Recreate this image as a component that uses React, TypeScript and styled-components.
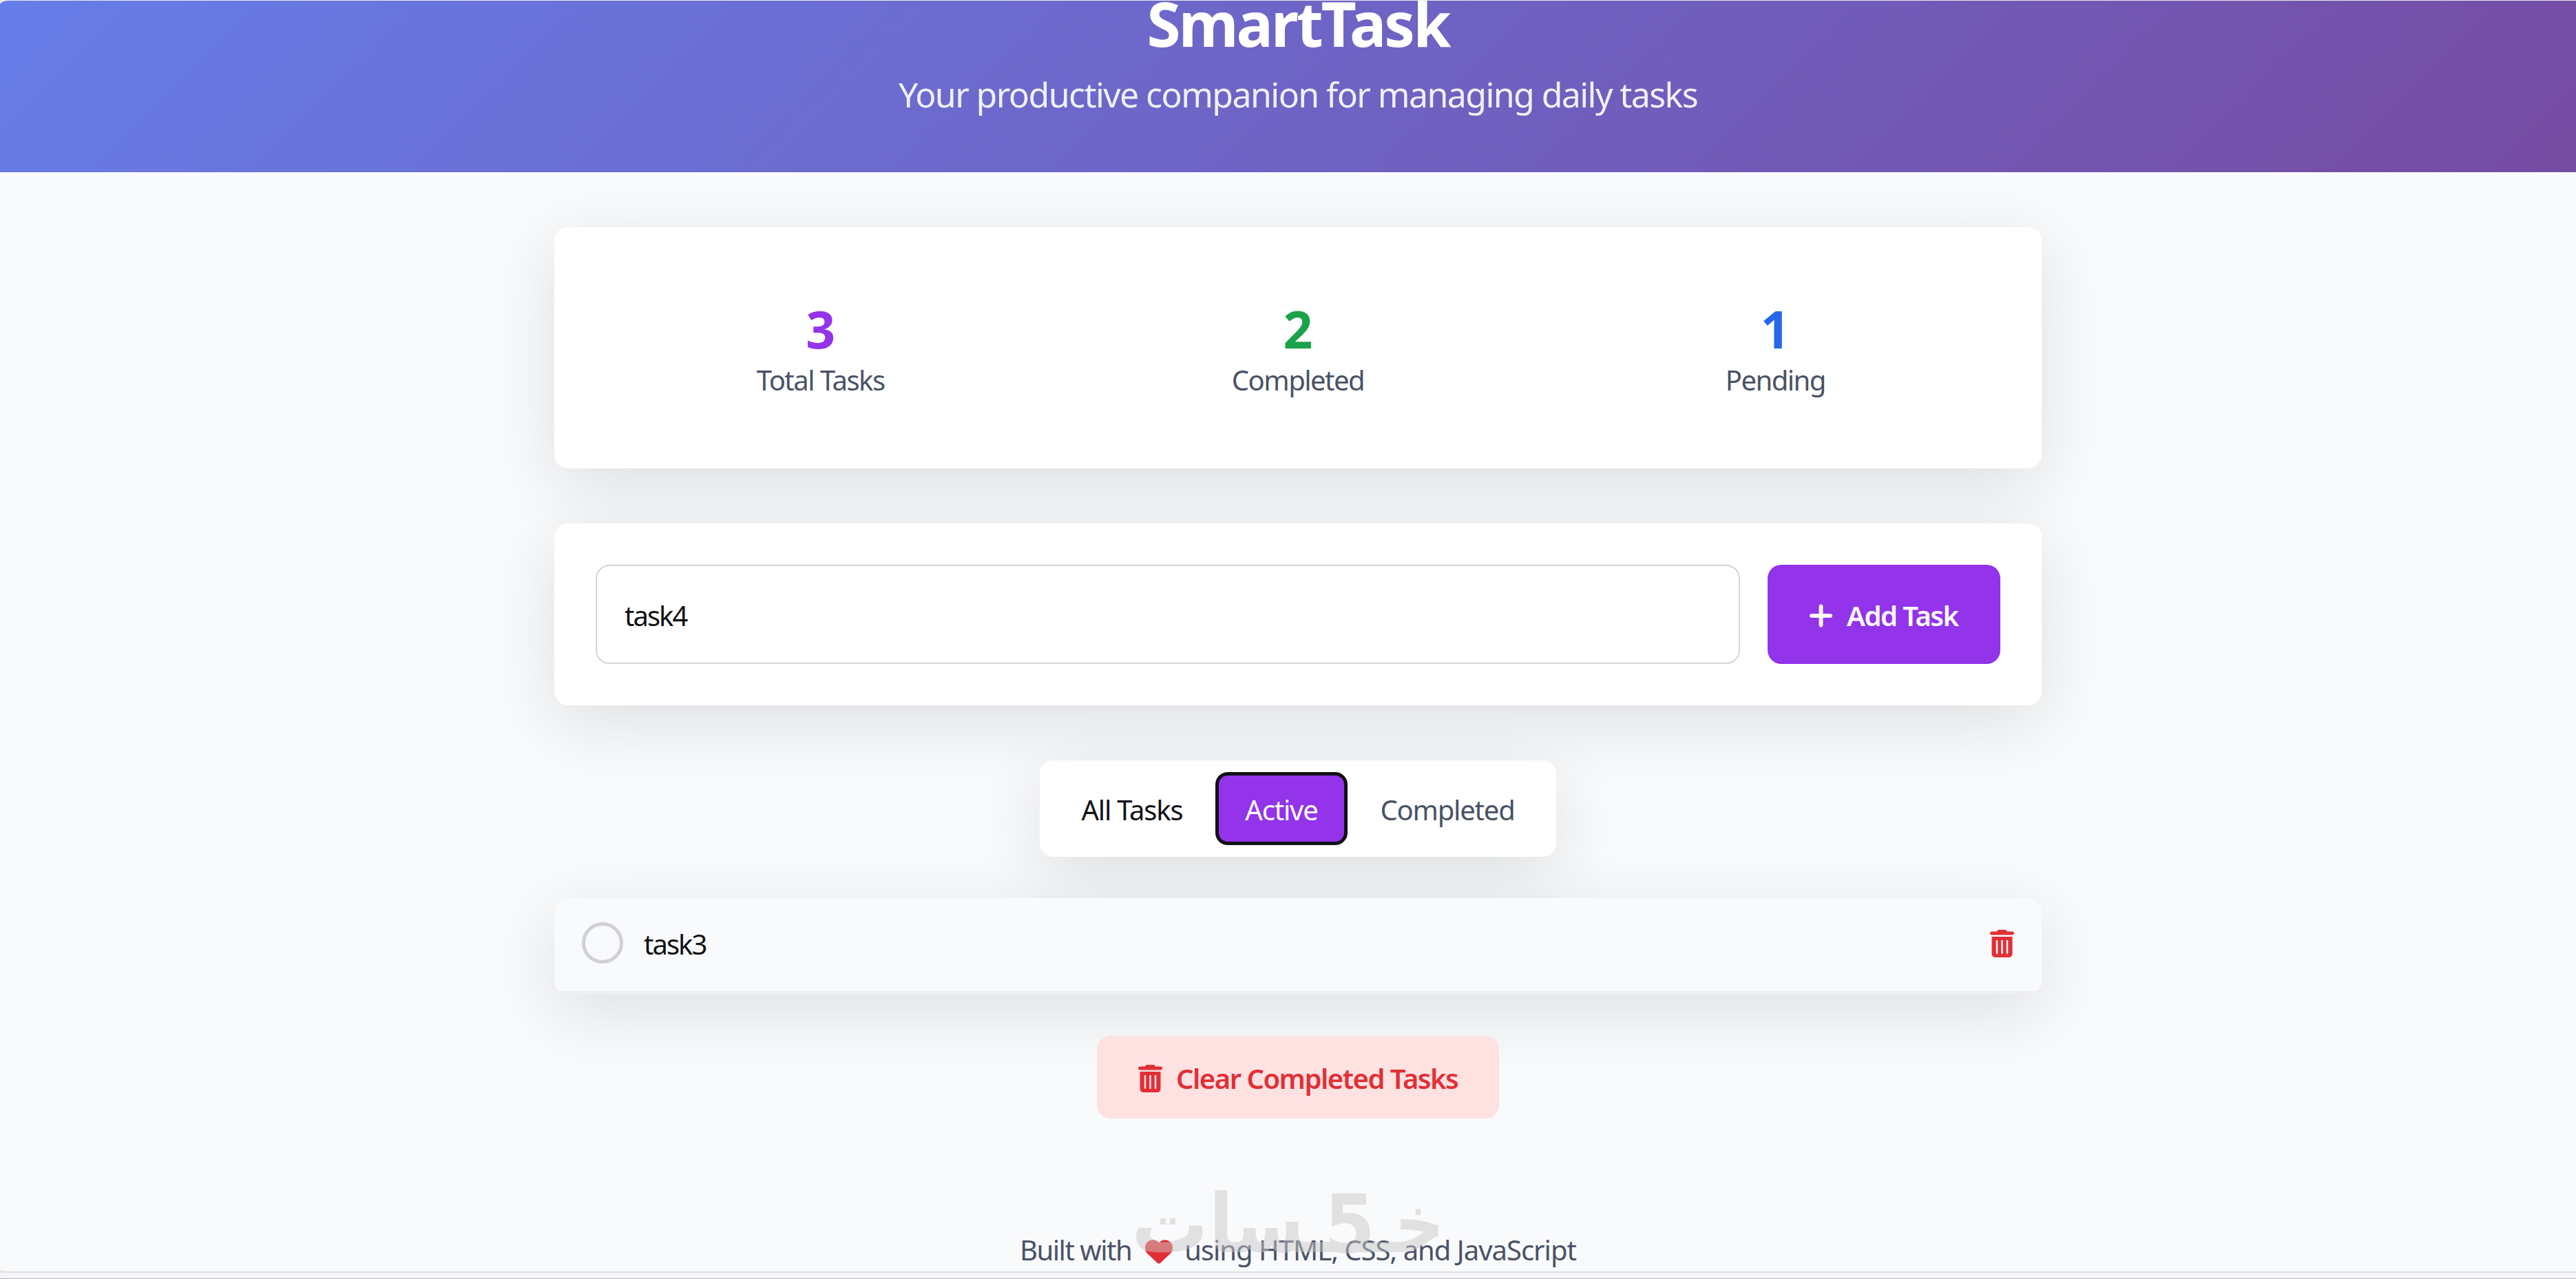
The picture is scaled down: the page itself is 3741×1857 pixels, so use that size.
import { useState } from 'react'
import { FaHeart, FaPlus, FaTrashCan } from 'react-icons/fa6'
import styled, { createGlobalStyle } from 'styled-components'

const GlobalStyle = createGlobalStyle`
  * {
    box-sizing: border-box;
  }

  body {
    margin: 0;
    background: #f4f5f7;
    font-family: 'Noto Sans', 'Open Sans', sans-serif;
    font-size: 40px;
    line-height: 60px;
    letter-spacing: -1.5px;
    color: #111115;
  }

  h1,
  p {
    margin: 0;
  }

  button,
  input {
    font: inherit;
    letter-spacing: inherit;
    color: inherit;
    border: none;
    margin: 0;
  }

  svg {
    display: block;
    flex-shrink: 0;
  }
`

const Window = styled.div`
  position: relative;
  width: 100%;
  height: 1857px;
  padding-top: 1px;
  overflow: hidden;
  background: #e9eaec;
`

const Viewport = styled.div`
  height: 1847px;
  overflow: hidden;
  background: #f9fafc;
  border-bottom: 2px solid #dedfe0;
  border-radius: 12px 0 0 12px / 6px 0 0 6px;
`

const WindowEdge = styled.div`
  height: 9px;
  background: #f4f5f7;
  border-bottom: 1px solid #b9b9bb;
`

const Page = styled.div`
  width: 3770px;
  margin-top: -101px;
`

const Header = styled.header`
  height: 350px;
  padding-top: 84px;
  text-align: center;
  color: #fff;
  background: linear-gradient(135deg, #667eea 0%, #764ba2 100%);
`

const Title = styled.h1`
  font-size: 89px;
  font-weight: 700;
  line-height: 100px;
  letter-spacing: -2.9px;
  margin-bottom: 18px;
`

const Lead = styled.p`
  font-size: 50px;
  line-height: 70px;
  letter-spacing: -1.58px;
  opacity: 0.9;
`

const Main = styled.main`
  display: flex;
  flex-direction: column;
  align-items: center;
  width: 2160px;
  margin: 0 auto;
  padding-top: 80px;
`

const Card = styled.section`
  width: 100%;
  background: #fff;
  border-radius: 20px;
  box-shadow: 0 25px 100px rgba(0, 0, 0, 0.11);
`

const Stats = styled(Card)`
  display: grid;
  grid-template-columns: repeat(3, 1fr);
  gap: 40px;
  height: 350px;
  padding: 102px 60px 0;
  text-align: center;
  margin-bottom: 80px;
`

const StatValue = styled.div<{ $color: string }>`
  font-size: 75px;
  font-weight: 700;
  line-height: 90px;
  letter-spacing: 0;
  color: ${({ $color }) => $color};
`

const StatLabel = styled.div`
  line-height: 60px;
  color: #4a5266;
`

const AddForm = styled(Card).attrs({ as: 'form' })`
  display: flex;
  gap: 40px;
  height: 264px;
  padding: 60px;
  margin-bottom: 80px;
`

const TaskInput = styled.input`
  flex: 1;
  min-width: 0;
  padding: 4px 40px 0;
  background: #fff;
  border: 2px solid #d3d4d8;
  border-radius: 20px;
  outline: none;
  letter-spacing: -2px;
`

const AddButton = styled.button`
  display: flex;
  align-items: center;
  gap: 20px;
  width: 338px;
  padding: 3px 0 0 60px;
  color: #fff;
  font-weight: 600;
  white-space: nowrap;
  background: #9333ea;
  border-radius: 20px;
`

const Filters = styled(Card)`
  display: flex;
  gap: 10px;
  width: 750px;
  height: 140px;
  padding: 20px;
  margin-bottom: 60px;
`

const FilterButton = styled.button<{ $active: boolean; $muted?: boolean }>`
  flex: 1 1 auto;
  padding: 4px 38px 0;
  white-space: nowrap;
  letter-spacing: -1.2px;
  color: ${({ $active, $muted }) =>
    $active ? '#fff' : $muted ? '#4a5266' : '#111115'};
  background: ${({ $active }) => ($active ? '#9333ea' : 'transparent')};
  border-radius: 15px;
  outline: ${({ $active }) => ($active ? '5px solid #111115' : 'none')};
  outline-offset: -2px;
`

const TaskList = styled(Card)`
  overflow: hidden;
  min-height: 140px;
  margin-bottom: 60px;
  background: #eeeff0;
`

const TaskRow = styled.div`
  display: flex;
  align-items: center;
  height: 135px;
  padding: 0 40px 5px;
  background: #f9fafc;

  & + & {
    margin-top: 5px;
  }
`

const Check = styled.button<{ $done: boolean }>`
  width: 60px;
  height: 60px;
  padding: 0;
  border: 5px solid #d0d1d6;
  border-radius: 50%;
  background: ${({ $done }) => ($done ? '#16a34a' : 'transparent')};
`

const TaskName = styled.span`
  flex: 1;
  padding: 3px 0 0 30px;
  letter-spacing: -2px;
`

const DeleteButton = styled.button`
  padding: 2px 0 0;
  color: #e22f36;
  background: none;
`

const ClearButton = styled.button`
  display: flex;
  align-items: center;
  gap: 20px;
  width: 584px;
  height: 120px;
  padding: 3px 0 0 60px;
  color: #e22f36;
  font-weight: 600;
  white-space: nowrap;
  background: #fee2e2;
  border-radius: 20px;
`

const TrashIcon = styled(FaTrashCan)`
  width: 35px;
  height: 40px;
`

const PlusIcon = styled(FaPlus)`
  width: 35px;
  height: 40px;
  stroke: currentColor;
  stroke-width: 10px;
`

const Footer = styled.footer`
  display: flex;
  justify-content: center;
  align-items: center;
  height: 60px;
  margin-top: 161px;
  color: #4a5266;
  white-space: nowrap;
`

const Heart = styled(FaHeart)`
  width: 40px;
  height: 40px;
  margin: 4px 17px 0 20px;
  color: #e22f36;
`

const Credits = styled.span`
  letter-spacing: -1px;
`

// brand mark stamped over the page
const Watermark = styled.svg`
  position: absolute;
  left: 1640px;
  top: 1700px;
  width: 462px;
  height: 150px;
  pointer-events: none;
  opacity: 0.49;
  fill: #cac8c8;
  font-family: 'DejaVu Sans', sans-serif;
  font-size: 118px;
  font-weight: 700;
  letter-spacing: 0;
`

type Filter = 'all' | 'active' | 'completed'

const filters: { id: Filter; label: string; muted?: boolean }[] = [
  { id: 'all', label: 'All Tasks' },
  { id: 'active', label: 'Active' },
  { id: 'completed', label: 'Completed', muted: true },
]

const initialTasks = [
  { id: 1, name: 'task1', done: true },
  { id: 2, name: 'task2', done: true },
  { id: 3, name: 'task3', done: false },
]

// pieces of the mark, left to right: centre and width of each
const markParts = [
  { text: '\u062a', center: 59, width: 112 },
  { text: '\u0640\u0633\u0627', center: 204, width: 176 },
  { text: '5', center: 320, width: 74 },
  { text: '\u062e\u0640', center: 404, width: 108 },
]

const App = () => {
  const [tasks, setTasks] = useState(initialTasks)
  const [filter, setFilter] = useState<Filter>('active')
  const [draft, setDraft] = useState('task4')

  const completed = tasks.filter((task) => task.done).length
  const stats = [
    { label: 'Total Tasks', value: tasks.length, color: '#9333ea' },
    { label: 'Completed', value: completed, color: '#1aa34a' },
    { label: 'Pending', value: tasks.length - completed, color: '#2567e8' },
  ]
  const visible = tasks.filter(
    (task) => filter === 'all' || task.done === (filter === 'completed'),
  )

  const addTask = () => {
    if (!draft.trim()) return
    setTasks([...tasks, { id: Date.now(), name: draft.trim(), done: false }])
    setDraft('')
  }

  const toggleTask = (id: number) =>
    setTasks(tasks.map((t) => (t.id === id ? { ...t, done: !t.done } : t)))

  return (
    <>
      <GlobalStyle />
      <Window>
        <Viewport>
          <Page>
            <Header>
              <Title>SmartTask</Title>
              <Lead>Your productive companion for managing daily tasks</Lead>
            </Header>

            <Main>
              <Stats>
                {stats.map((stat) => (
                  <div key={stat.label}>
                    <StatValue $color={stat.color}>{stat.value}</StatValue>
                    <StatLabel>{stat.label}</StatLabel>
                  </div>
                ))}
              </Stats>

              <AddForm>
                <TaskInput
                  value={draft}
                  onChange={(e) => setDraft(e.target.value)}
                />
                <AddButton type="button" onClick={addTask}>
                  <PlusIcon />
                  Add Task
                </AddButton>
              </AddForm>

              <Filters>
                {filters.map((item) => (
                  <FilterButton
                    key={item.id}
                    $active={item.id === filter}
                    $muted={item.muted}
                    onClick={() => setFilter(item.id)}
                  >
                    {item.label}
                  </FilterButton>
                ))}
              </Filters>

              <TaskList>
                {visible.map((task) => (
                  <TaskRow key={task.id}>
                    <Check
                      $done={task.done}
                      onClick={() => toggleTask(task.id)}
                    />
                    <TaskName>{task.name}</TaskName>
                    <DeleteButton
                      onClick={() =>
                        setTasks(tasks.filter((t) => t.id !== task.id))
                      }
                    >
                      <TrashIcon />
                    </DeleteButton>
                  </TaskRow>
                ))}
              </TaskList>

              <ClearButton
                onClick={() => setTasks(tasks.filter((t) => !t.done))}
              >
                <TrashIcon />
                Clear Completed Tasks
              </ClearButton>
            </Main>

            <Footer>
              <span>Built with</span>
              <Heart />
              <Credits>using HTML, CSS, and JavaScript</Credits>
            </Footer>
          </Page>
        </Viewport>
        <WindowEdge />
        <Watermark viewBox="0 0 462 150">
          {markParts.map((part) => (
            <text
              key={part.text}
              x={part.center}
              y="118"
              textAnchor="middle"
              textLength={part.width}
              lengthAdjust="spacingAndGlyphs"
            >
              {part.text}
            </text>
          ))}
          <rect x="270" y="104" width="100" height="14" />
        </Watermark>
      </Window>
    </>
  )
}

export default App
